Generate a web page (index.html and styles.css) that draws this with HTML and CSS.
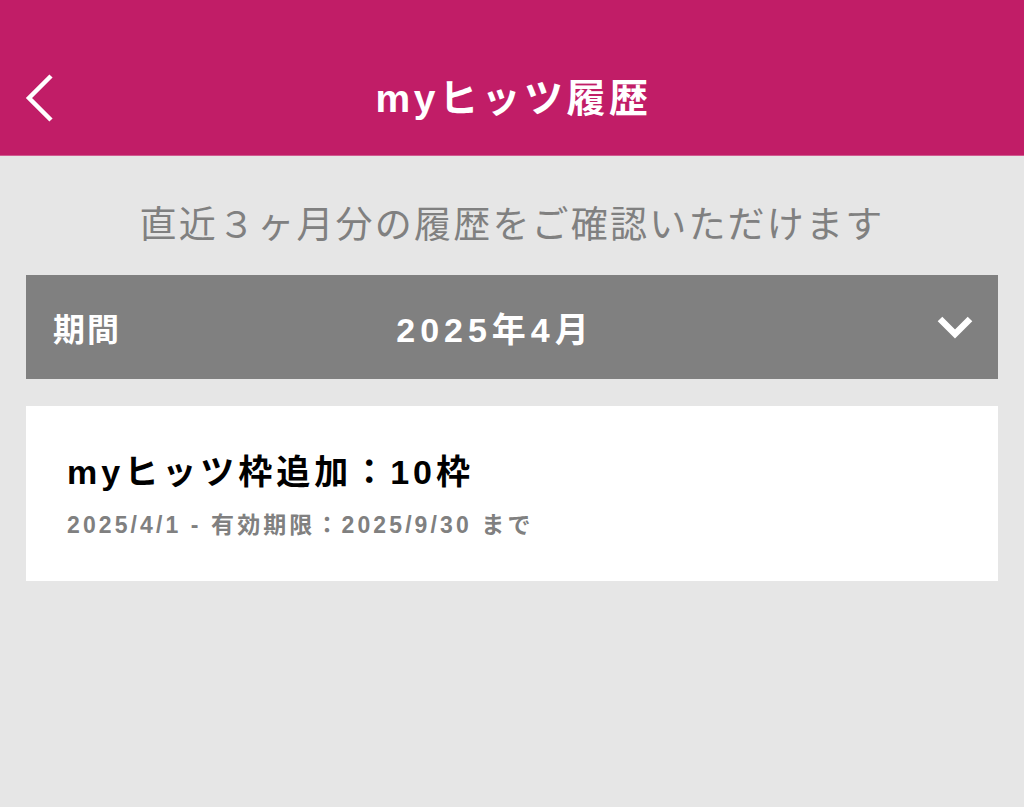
FILE: index.html
```html
<!DOCTYPE html>
<html lang="ja">
<head>
<meta charset="utf-8">
<link rel="stylesheet" href="styles.css">
</head>
<body>
<header class="header">
  <svg class="back" width="40" height="60" viewBox="0 0 40 60"><polyline points="28,4 6,26 28,48" fill="none" stroke="#fff" stroke-width="4.5"/></svg>
  <h1 class="title">myヒッツ履歴</h1>
</header>
<main class="main">
  <p class="lead">直近３ヶ月分の履歴をご確認いただけます</p>
  <div class="period">
    <span class="period-label">期間</span>
    <span class="period-value">2025年4月</span>
    <svg class="chev" width="40" height="30" viewBox="0 0 40 30"><polyline points="5,5 20,20 35,5" fill="none" stroke="#fff" stroke-width="6.5"/></svg>
  </div>
  <div class="card">
    <div class="card-title">myヒッツ枠追加：10枠</div>
    <div class="card-sub">2025/4/1 - 有効期限：2025/9/30 まで</div>
  </div>
</main>
</body>
</html>
```
FILE: styles.css
```css
* { box-sizing: border-box; }
html, body { margin: 0; padding: 0; }
body {
  width: 1024px;
  height: 807px;
  background: #e6e6e6;
  font-family: "Liberation Sans", "Noto Sans CJK JP", sans-serif;
  overflow: hidden;
}
.header {
  position: relative;
  height: 156px;
  background: #c11d67;
  display: flex;
  align-items: center;
  justify-content: center;
  padding-top: 42px;
  border-bottom: 1px solid #d05a8f;
}
.back {
  position: absolute;
  left: 23px;
  top: 72px;
}
.title {
  margin: 0 0 0 3px;
  color: #fff;
  font-size: 39px;
  font-weight: 700;
  line-height: 1;
  letter-spacing: 3.5px;
}
.main {
  padding: 0 26px;
}
.lead {
  margin: 0;
  padding-top: 44px;
  height: 119px;
  text-align: center;
  color: #808080;
  font-family: "Noto Sans CJK JP", sans-serif;
  font-size: 37px;
  line-height: 44px;
  letter-spacing: 2.2px;
}
.period {
  position: relative;
  height: 104px;
  background: #808080;
  display: flex;
  align-items: center;
  padding: 0 27px;
  color: #fff;
  font-weight: 700;
}
.period-label {
  font-size: 32px;
  letter-spacing: 2px;
}
.period-value {
  position: absolute;
  left: 0;
  right: 34px;
  text-align: center;
  font-size: 34px;
  letter-spacing: 5px;
  pointer-events: none;
}
.chev {
  margin-left: auto;
  margin-right: -4px;
  margin-top: 4px;
}
.card {
  margin-top: 27px;
  height: 175px;
  background: #fff;
  padding: 43px 41px 0;
}
.card-title {
  font-size: 34px;
  font-weight: 700;
  color: #000;
  line-height: 46px;
  letter-spacing: 4px;
}
.card-sub {
  margin-top: 15px;
  font-size: 23px;
  font-weight: 700;
  color: #808080;
  line-height: 30px;
  letter-spacing: 3.1px;
}
```
